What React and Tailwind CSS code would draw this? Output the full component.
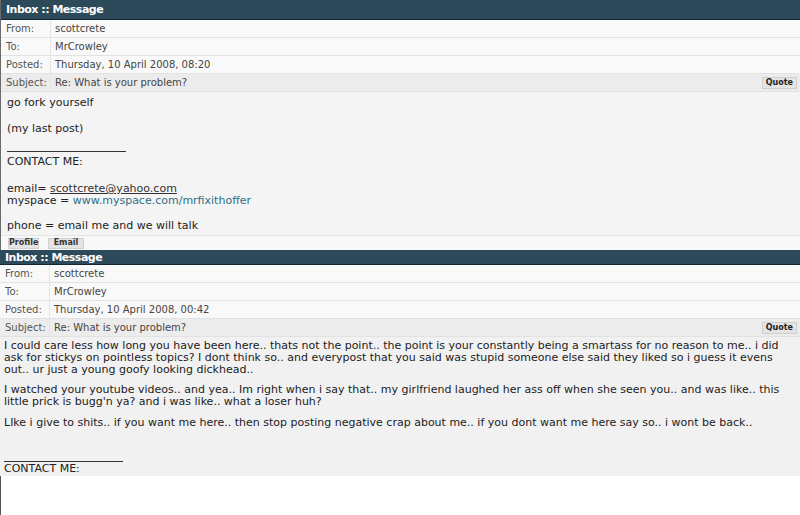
import React from 'react';

const Row = ({ label, value, subject = false }) => (
  <div className={`flex h-[18px] items-center border-b border-[#e2e2e2] ${subject ? 'bg-[#ececec]' : 'bg-[#f9f9f9]'}`}>
    <div className="w-[50px] h-full flex items-center pl-[5px] border-r border-[#e6e6e6] text-[#555] shrink-0">{label}</div>
    <div className="flex-1 pl-[4px] text-[#444]">{value}</div>
    {subject && (
      <button className="mr-[3px] h-[12px] px-[3px] bg-[#e4e4e4] border border-[#cfcfcf] text-[8px] font-bold text-[#222] leading-none">
        Quote
      </button>
    )}
  </div>
);

const Header = ({ clipped = false }) => (
  <div
    className={`${clipped ? 'h-[15px]' : 'h-[20px]'} flex items-center bg-[#2d4a5a] border-b border-[#16252e] overflow-hidden`}
  >
    <span className="pl-[5px] text-white font-bold text-[11px] leading-none tracking-[-0.5px]">
      Inbox :: Message
    </span>
  </div>
);

export default function App() {
  return (
    <div className="w-[800px] h-[515px] bg-white overflow-hidden flex flex-col font-['DejaVu_Sans','Liberation_Sans',sans-serif] text-[10px]">
      {/* first message */}
      <div className="border-l border-[#6a6a6a]">
        <Header />
        <Row label="From:" value="scottcrete" />
        <Row label="To:" value="MrCrowley" />
        <Row label="Posted:" value="Thursday, 10 April 2008, 08:20" />
        <Row label="Subject:" value="Re: What is your problem?" subject />
        <div className="bg-[#f4f4f4] pl-[6px] pt-[5px] pb-[3px] text-[11px] leading-[12px] text-[#222] whitespace-nowrap">
          <div>go fork yourself</div>
          <div className="mt-[14px]">(my last post)</div>
          <div className="mt-[16px] w-[119px] border-b border-[#333]"></div>
          <div className="mt-[4px]">CONTACT ME:</div>
          <div className="mt-[15px]">
            email= <span className="underline text-[#333]">scottcrete@yahoo.com</span>
          </div>
          <div>
            myspace = <span className="text-[#2f6f85]">www.myspace.com/mrfixithoffer</span>
          </div>
          <div className="mt-[13px]">phone = email me and we will talk</div>
        </div>
        <div className="h-[15px] bg-[#f8f8f8] border-t border-[#e4e4e4] flex items-center gap-[9px] pl-[7px]">
          <button className="h-[11px] w-[31px] bg-[#e4e4e4] border border-[#d0d0d0] text-[8px] font-bold text-[#333] leading-none">Profile</button>
          <button className="h-[11px] w-[36px] bg-[#e4e4e4] border border-[#d0d0d0] text-[8px] font-bold text-[#333] leading-none">Email</button>
        </div>
      </div>

      {/* second message */}
      <div>
        <Header clipped />
        <Row label="From:" value="scottcrete" />
        <Row label="To:" value="MrCrowley" />
        <Row label="Posted:" value="Thursday, 10 April 2008, 00:42" />
        <Row label="Subject:" value="Re: What is your problem?" subject />
        <div className="bg-[#f1f1f1] pl-[4px] pt-[3px] pb-[1px] text-[11px] leading-[12px] text-[#222] whitespace-nowrap">
          <div>
            I could care less how long you have been here.. thats not the point.. the point is your constantly being a smartass for no reason to me.. i did
            <br />
            ask for stickys on pointless topics? I dont think so.. and everypost that you said was stupid someone else said they liked so i guess it evens
            <br />
            out.. ur just a young goofy looking dickhead..
          </div>
          <div className="mt-[8px]">
            I watched your youtube videos.. and yea.. Im right when i say that.. my girlfriend laughed her ass off when she seen you.. and was like.. this
            <br />
            little prick is bugg'n ya? and i was like.. what a loser huh?
          </div>
          <div className="mt-[9px]">
            LIke i give to shits.. if you want me here.. then stop posting negative crap about me.. if you dont want me here say so.. i wont be back..
          </div>
          <div className="mt-[32px] w-[119px] border-b border-[#333]"></div>
          <div className="mt-[1px]">CONTACT ME:</div>
        </div>
      </div>

      <div className="flex-1 border-l border-[#555]"></div>
    </div>
  );
}
